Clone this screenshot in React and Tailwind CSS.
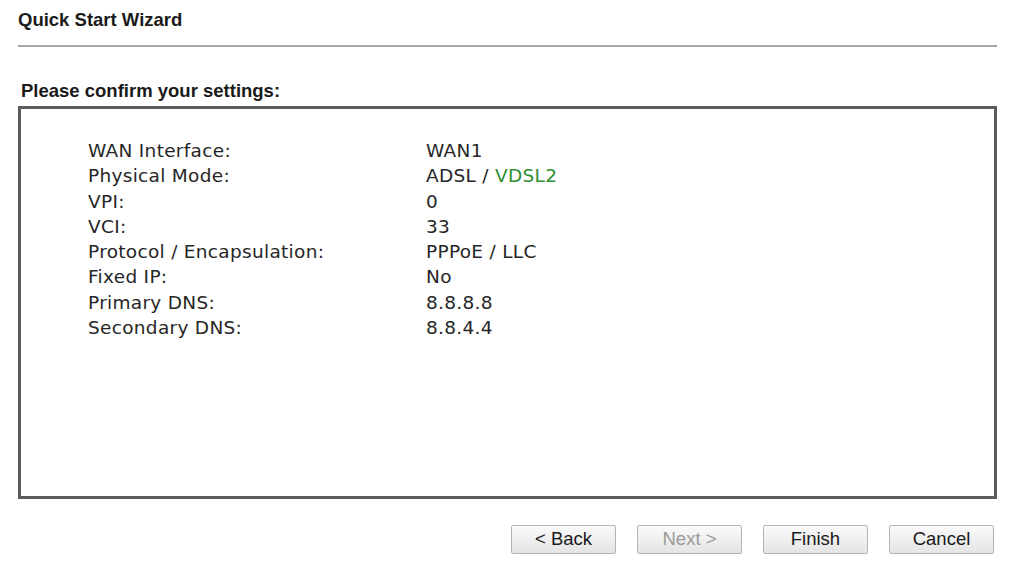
import React from 'react';

const rows = [
    ['WAN Interface:', 'WAN1'],
    ['Physical Mode:', null],
    ['VPI:', '0'],
    ['VCI:', '33'],
    ['Protocol / Encapsulation:', 'PPPoE / LLC'],
    ['Fixed IP:', 'No'],
    ['Primary DNS:', '8.8.8.8'],
    ['Secondary DNS:', '8.8.4.4'],
];

const WizardButton = ({ children, disabled }) => (
    <button
        disabled={disabled}
        className={`w-[105px] h-[29px] rounded-[2px] border border-[#b4b4b4] bg-gradient-to-b from-[#fafafa] to-[#e4e4e4] text-[18.5px] leading-none ${disabled ? 'text-[#9a9a9a]' : 'text-[#1a1a1a]'}`}
        style={{ fontFamily: '"Liberation Sans", Arial, sans-serif' }}
    >
        {children}
    </button>
);

const App = () => {
    return (
        <div className="w-[1013px] h-[563px] bg-white pl-[18px] pr-[16px] pt-[9px]" style={{ fontFamily: '"Liberation Sans", Arial, sans-serif' }}>
            <h1 className="text-[18.5px] font-bold leading-[22px] text-[#1a1a1a]">Quick Start Wizard</h1>
            <div className="mt-[14px] h-[2px] bg-[#a6a6a6]" />

            <h2 className="mt-[33px] pl-[3px] text-[18.5px] font-bold leading-[22px] text-[#1a1a1a]">Please confirm your settings:</h2>

            <div className="mt-[4px] h-[393px] border-[3px] border-[#5c5c5c] pl-[67px] pt-[29px]" style={{ fontFamily: '"DejaVu Sans", Verdana, sans-serif' }}>
                <div className="grid grid-cols-[338px_auto] text-[18.5px] leading-[25.3px] tracking-[0.3px] text-[#262626]">
                    {rows.map(([label, value]) => (
                        <React.Fragment key={label}>
                            <div>{label}</div>
                            <div>
                                {value !== null ? value : (
                                    <>ADSL / <span className="text-[#2f8f2f]">VDSL2</span></>
                                )}
                            </div>
                        </React.Fragment>
                    ))}
                </div>
            </div>

            <div className="mt-[26px] flex justify-end gap-[21px] pr-[3px]">
                <WizardButton>&lt; Back</WizardButton>
                <WizardButton disabled>Next &gt;</WizardButton>
                <WizardButton>Finish</WizardButton>
                <WizardButton>Cancel</WizardButton>
            </div>
        </div>
    );
};

export default App;
